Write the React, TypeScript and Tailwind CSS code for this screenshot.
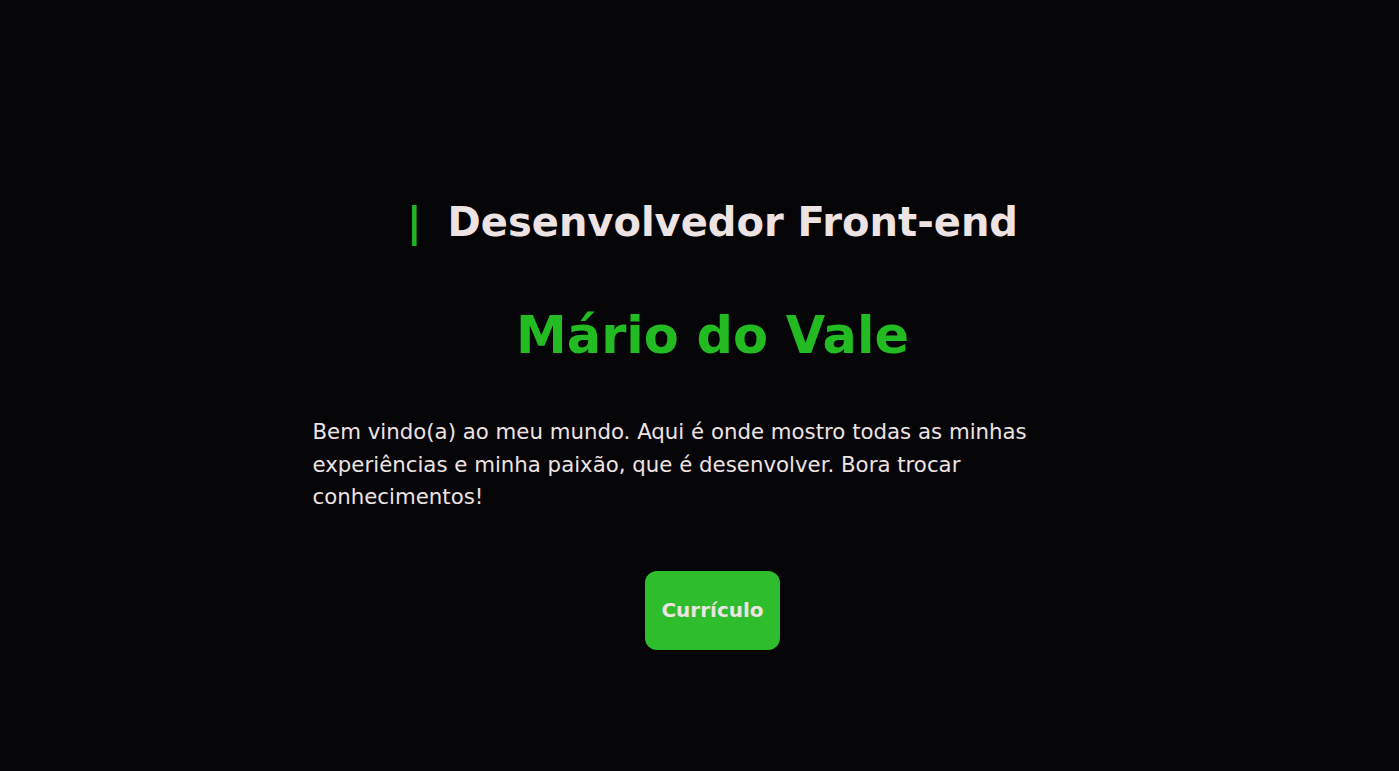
const font = { fontFamily: '"Comic Sans MS", "DejaVu Sans", sans-serif' };

export default function App() {
  return (
    <main
      className="min-h-screen bg-[#050407] text-[#ede3e3] pl-[26px] pt-[190px]"
      style={font}
    >
      <section className="mx-auto w-[800px] flex flex-col items-center">
        {/* Title */}
        <h2 className="flex items-center text-[40px] font-bold leading-[64px]">
          <span className="text-[#23b523] mr-[26px]">|</span>
          Desenvolvedor Front-end
        </h2>

        <h1 className="mt-[50px] text-[51px] font-bold leading-[64px] text-[#22bb22]">
          Mário do Vale
        </h1>

        {/* Intro */}
        <p className="mt-[48px] self-stretch text-[21.3px] leading-[32.5px]">
          Bem vindo(a) ao meu mundo. Aqui é onde mostro todas as minhas
          experiências e minha paixão, que é desenvolver. Bora trocar
          conhecimentos!
        </p>

        <a
          href="#"
          className="mt-[57px] w-[135px] h-[79px] rounded-[12px] bg-[#2dbd2d] flex items-center justify-center text-[20px] font-bold text-[#ede3e3]"
        >
          Currículo
        </a>
      </section>
    </main>
  );
}
